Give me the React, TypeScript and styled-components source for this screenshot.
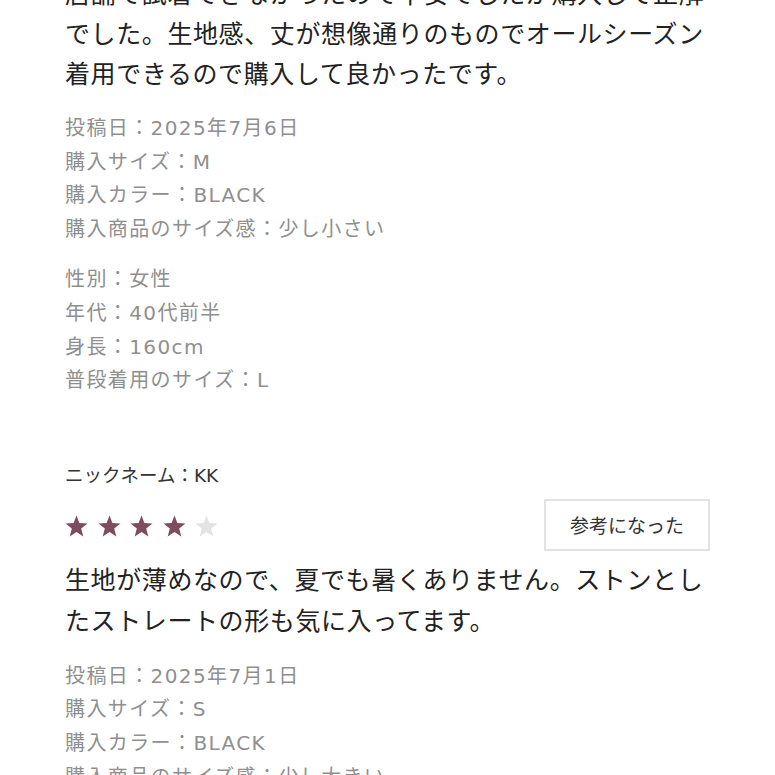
import styled, { createGlobalStyle } from "styled-components";

const GlobalStyle = createGlobalStyle`
    html, body {
        margin: 0;
        padding: 0;
        background: #ffffff;
        overflow: hidden;
    }
    body {
        font-family: "Noto Sans CJK JP", "Noto Sans", sans-serif;
    }
`;

const Page = styled.div`
    width: 775px;
    height: 775px;
    overflow: hidden;
    box-sizing: border-box;
    padding: 0 65px;
`;

const Content = styled.div`
    margin-top: -28px;
`;

const ReviewBody = styled.p`
    margin: 0;
    font-size: 25px;
    letter-spacing: 0.6px;
    line-height: 40px;
    color: #222222;
`;

const MetaGroup = styled.div<{ $gap: number }>`
    margin-top: ${(p) => p.$gap}px;
    display: flex;
    flex-direction: column;
`;

const MetaLine = styled.div`
    font-family: "DejaVu Sans", "Noto Sans CJK JP", sans-serif;
    font-size: 20px;
    letter-spacing: 1.4px;
    line-height: 33.6px;
    color: #8f8f8f;
    white-space: nowrap;
`;

const Nickname = styled.div`
    margin-top: 65px;
    font-family: "DejaVu Sans", "Noto Sans CJK JP", sans-serif;
    font-size: 18.5px;
    line-height: 26px;
    color: #333333;
`;

const RatingRow = styled.div`
    margin-top: 10px;
    display: flex;
    align-items: center;
    justify-content: space-between;
`;

const Stars = styled.div`
    display: flex;
    gap: 9.5px;
    padding-top: 2px;
`;

const HelpfulButton = styled.button`
    width: 166px;
    height: 52px;
    box-sizing: border-box;
    background: #ffffff;
    border: 2px solid #e2e2e2;
    font-family: inherit;
    font-size: 19px;
    color: #333333;
    padding: 0;
    cursor: pointer;
`;

const SecondBody = styled(ReviewBody)`
    margin-top: 7px;
    line-height: 41px;
`;

function Star({ filled }: { filled: boolean }) {
    return (
        <svg width="23" height="22" viewBox="0 0 24 23">
            <polygon
                points="12,0.5 15,8.4 23.5,8.8 16.9,14.1 19.1,22.4 12,17.7 4.9,22.4 7.1,14.1 0.5,8.8 9,8.4"
                fill={filled ? "#7e4b5f" : "#e3e3e3"}
            />
        </svg>
    );
}

function Rating({ value }: { value: number }) {
    return (
        <Stars>
            {[1, 2, 3, 4, 5].map((n) => (
                <Star key={n} filled={n <= value} />
            ))}
        </Stars>
    );
}

export default function App() {
    return (
        <>
            <GlobalStyle />
            <Page>
                <Content>
                    <ReviewBody>
                        店舗で試着できなかったので不安でしたが購入して正解でした。生地感、丈が想像通りのものでオールシーズン着用できるので購入して良かったです。
                    </ReviewBody>
                    <MetaGroup $gap={20}>
                        <MetaLine>投稿日：2025年7月6日</MetaLine>
                        <MetaLine>購入サイズ：M</MetaLine>
                        <MetaLine>購入カラー：BLACK</MetaLine>
                        <MetaLine>購入商品のサイズ感：少し小さい</MetaLine>
                    </MetaGroup>
                    <MetaGroup $gap={17}>
                        <MetaLine>性別：女性</MetaLine>
                        <MetaLine>年代：40代前半</MetaLine>
                        <MetaLine>身長：160cm</MetaLine>
                        <MetaLine>普段着用のサイズ：L</MetaLine>
                    </MetaGroup>

                    <Nickname>ニックネーム：KK</Nickname>
                    <RatingRow>
                        <Rating value={4} />
                        <HelpfulButton>参考になった</HelpfulButton>
                    </RatingRow>
                    <SecondBody>
                        生地が薄めなので、夏でも暑くありません。ストンとしたストレートの形も気に入ってます。
                    </SecondBody>
                    <MetaGroup $gap={20}>
                        <MetaLine>投稿日：2025年7月1日</MetaLine>
                        <MetaLine>購入サイズ：S</MetaLine>
                        <MetaLine>購入カラー：BLACK</MetaLine>
                        <MetaLine>購入商品のサイズ感：少し大きい</MetaLine>
                    </MetaGroup>
                </Content>
            </Page>
        </>
    );
}
